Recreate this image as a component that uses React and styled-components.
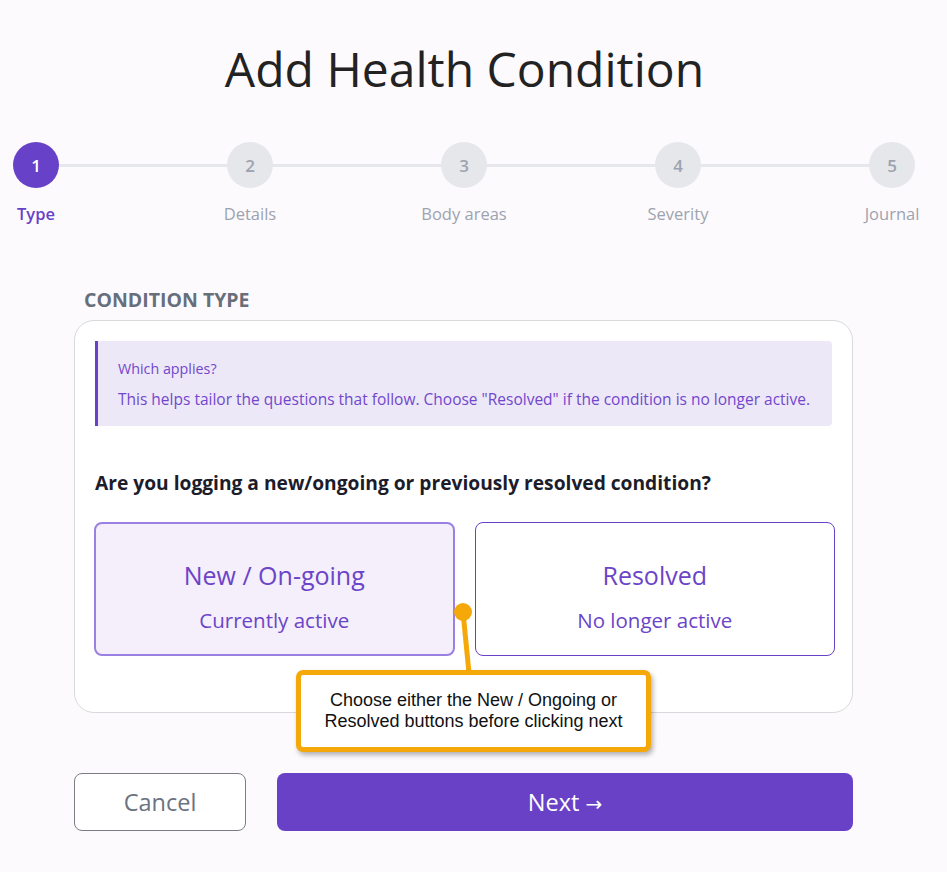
import styled, { createGlobalStyle } from 'styled-components';

const GlobalStyle = createGlobalStyle`
  body {
    margin: 0;
    background: #fdfafd;
    font-family: "Open Sans", "Noto Sans", sans-serif;
  }
`;

const steps = ['Type', 'Details', 'Body areas', 'Severity', 'Journal'];

const Page = styled.div`
  width: 929px;
  padding-top: 39px;
  box-sizing: border-box;
`;

const Title = styled.h1`
  margin: 0;
  text-align: center;
  font-size: 48px;
  font-weight: 400;
  line-height: 60px;
  color: #222;
`;

const Stepper = styled.div`
  display: flex;
  width: 928px;
  margin-top: 43px;
`;

const Step = styled.div`
  width: 72px;
  display: flex;
  flex-direction: column;
  align-items: center;
  flex-shrink: 0;
`;

const Circle = styled.div`
  width: 46px;
  height: 46px;
  border-radius: 50%;
  display: flex;
  align-items: center;
  justify-content: center;
  font-size: 17px;
  font-weight: 600;
  background: ${(p) => (p.$active ? '#6741c8' : '#e5e7eb')};
  color: ${(p) => (p.$active ? '#fff' : '#9ca3af')};
`;

const StepLabel = styled.div`
  margin-top: 14px;
  font-size: 16.5px;
  white-space: nowrap;
  font-weight: ${(p) => (p.$active ? 600 : 400)};
  color: ${(p) => (p.$active ? '#6741c8' : '#9ca3af')};
`;

const Connector = styled.div`
  flex: 1;
  height: 3px;
  margin: 22px -13px 0;
  background: #e5e7eb;
`;

const Section = styled.div`
  width: 779px;
  margin: 62px 0 0 74px;
`;

const SectionLabel = styled.div`
  padding-left: 10px;
  font-size: 19.5px;
  font-weight: 700;
  color: #676f7b;
  line-height: 26px;
  margin-bottom: 7px;
`;

const CardWrap = styled.div`
  position: relative;
`;

const Card = styled.div`
  background: #fff;
  border: 1px solid #d9d9dd;
  border-radius: 20px;
  padding: 20px 20px 56px;
`;

const Info = styled.div`
  background: #ede8f8;
  border-left: 3px solid #6741c8;
  border-radius: 0 4px 4px 0;
  padding: 18px 20px 17px;
  color: #7247cc;
`;

const InfoTitle = styled.div`
  font-size: 14.3px;
  line-height: 20px;
`;

const InfoText = styled.div`
  margin-top: 10px;
  font-size: 15.5px;
  line-height: 20px;
  white-space: nowrap;
`;

const Question = styled.div`
  margin-top: 45px;
  font-size: 19.2px;
  font-weight: 700;
  color: #1c1c2a;
  line-height: 24px;
`;

const Options = styled.div`
  display: grid;
  grid-template-columns: 1fr 1fr;
  gap: 20px;
  margin: 27px -3px 0 -1px;
`;

const Option = styled.button`
  height: 134px;
  border-radius: 8px;
  border: ${(p) => (p.$selected ? '2px solid #9b80e4' : '1px solid #6741c8')};
  background: ${(p) => (p.$selected ? '#f4effb' : '#fff')};
  color: #6b44c8;
  font-family: inherit;
  display: flex;
  flex-direction: column;
  align-items: center;
  justify-content: center;
  gap: 17px;
  padding: 14px 0 0;
  cursor: pointer;
`;

const OptionTitle = styled.span`
  font-size: 25px;
  line-height: 30px;
`;

const OptionSub = styled.span`
  font-size: 20.5px;
  line-height: 26px;
`;

const Actions = styled.div`
  display: flex;
  gap: 31px;
  margin-top: 60px;
`;

const Button = styled.button`
  height: 58px;
  border-radius: 8px;
  font-family: inherit;
  font-size: 23.5px;
  cursor: pointer;
  ${(p) =>
    p.$primary
      ? `flex: 1; background: #6941c6; color: #fff; border: none;`
      : `width: 172px; background: #fff; color: #6b7280; border: 1px solid #7a7d84;`}
`;

const Arrow = styled.span`
  font-family: "DejaVu Sans", sans-serif;
  font-size: 20px;
`;

const Callout = styled.div`
  position: absolute;
  left: 222px;
  top: 281px;
`;

const Pointer = styled.svg`
  position: absolute;
  left: 158px;
  top: 0;
  overflow: visible;
`;

const CalloutBox = styled.div`
  position: relative;
  margin-top: 69px;
  width: 345px;
  height: 72px;
  background: #fff;
  border: 5px solid #f5a80a;
  border-radius: 7px;
  box-shadow: 2px 3px 5px rgba(0, 0, 0, 0.3);
  display: flex;
  align-items: center;
  justify-content: center;
  text-align: center;
  font-family: "Liberation Sans", Arial, sans-serif;
  font-size: 18px;
  line-height: 21px;
  color: #111;
`;

const App = () => (
  <Page>
    <GlobalStyle />
    <Title>Add Health Condition</Title>
    <Stepper>
      {steps.map((label, i) => (
        <>
          {i > 0 && <Connector key={`c${i}`} />}
          <Step key={label}>
            <Circle $active={i === 0}>{i + 1}</Circle>
            <StepLabel $active={i === 0}>{label}</StepLabel>
          </Step>
        </>
      ))}
    </Stepper>
    <Section>
      <SectionLabel>CONDITION TYPE</SectionLabel>
      <CardWrap>
        <Card>
          <Info>
            <InfoTitle>Which applies?</InfoTitle>
            <InfoText>
              This helps tailor the questions that follow. Choose "Resolved" if the condition is no longer active.
            </InfoText>
          </Info>
          <Question>Are you logging a new/ongoing or previously resolved condition?</Question>
          <Options>
            <Option $selected>
              <OptionTitle>New / On-going</OptionTitle>
              <OptionSub>Currently active</OptionSub>
            </Option>
            <Option>
              <OptionTitle>Resolved</OptionTitle>
              <OptionSub>No longer active</OptionSub>
            </Option>
          </Options>
        </Card>
        <Callout>
          <Pointer width="20" height="75">
            <line x1="9" y1="11" x2="15" y2="72" stroke="#f5a80a" strokeWidth="5" />
            <circle cx="9" cy="11" r="9" fill="#f5a80a" />
          </Pointer>
          <CalloutBox>
            Choose either the New / Ongoing or
            <br />
            Resolved buttons before clicking next
          </CalloutBox>
        </Callout>
      </CardWrap>
      <Actions>
        <Button>Cancel</Button>
        <Button $primary>
          Next <Arrow>→</Arrow>
        </Button>
      </Actions>
    </Section>
  </Page>
);

export default App;
